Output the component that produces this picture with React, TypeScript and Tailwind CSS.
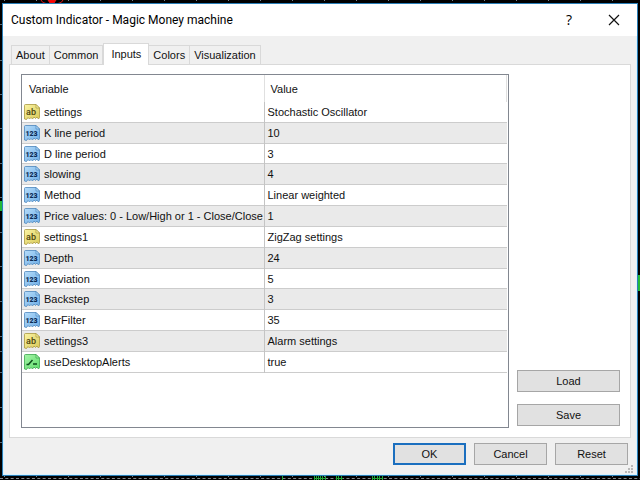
import React from "react";

type Kind = "text" | "number" | "bool";

type Row = { kind: Kind; name: string; value: string };

const rows: Row[] = [
  { kind: "text", name: "settings", value: "Stochastic Oscillator" },
  { kind: "number", name: "K line period", value: "10" },
  { kind: "number", name: "D line period", value: "3" },
  { kind: "number", name: "slowing", value: "4" },
  { kind: "number", name: "Method", value: "Linear weighted" },
  { kind: "number", name: "Price values: 0 - Low/High or 1 - Close/Close", value: "1" },
  { kind: "text", name: "settings1", value: "ZigZag settings" },
  { kind: "number", name: "Depth", value: "24" },
  { kind: "number", name: "Deviation", value: "5" },
  { kind: "number", name: "Backstep", value: "3" },
  { kind: "number", name: "BarFilter", value: "35" },
  { kind: "text", name: "settings3", value: "Alarm settings" },
  { kind: "bool", name: "useDesktopAlerts", value: "true" },
];

const palette = {
  text: { light: "#fbf4a4", dark: "#d9c957", edge: "#a8983f", ink: "#4a430c" },
  number: { light: "#b5dcfa", dark: "#6faee6", edge: "#4c86bd", ink: "#0b2c55" },
  bool: { light: "#a5f5a8", dark: "#5fdc6c", edge: "#3aa54c", ink: "#0c4d1b" },
};

function TypeIcon({ kind }: { kind: Kind }) {
  const c = palette[kind];
  return (
    <svg width="16" height="16" viewBox="0 0 16 16" className="block shrink-0" aria-hidden="true">
      <defs>
        <linearGradient id={`fill-${kind}`} x1="0" y1="0" x2="1" y2="1">
          <stop offset="0" stopColor={c.light} />
          <stop offset="1" stopColor={c.dark} />
        </linearGradient>
      </defs>
      <path
        d="M.5 1.500q0-1 1-1H12L15.500 4v9.500L14.500 15l-1.500-2-1.500 1.500-1.500-1.500-1.500 2L7 13.500 5.500 15 4 13.500l-1.500 2-2-.5z"
        fill={`url(#fill-${kind})`}
        stroke={c.edge}
        strokeWidth=".8"
      />
      <path d="M12 .5V4h3.500z" fill={c.light} stroke={c.edge} strokeWidth=".7" />
      {kind === "text" && (
        <text x="7" y="10.500" textAnchor="middle" fontSize="9" fontWeight="500" fill={c.ink} fontFamily="Roboto, sans-serif">
          ab
        </text>
      )}
      {kind === "number" && (
        <text x="7.500" y="11" textAnchor="middle" fontSize="7" fontWeight="900" fill={c.ink} fontFamily="Roboto, sans-serif">
          123
        </text>
      )}
      {kind === "bool" && <path d="M2.500 10.500h2l4-4.500M9 10h4" fill="none" stroke={c.ink} strokeWidth="1.500" />}
    </svg>
  );
}

const columns = Array.from({ length: 20 }, (_, i) => 4 + i * 32);
const levels = [24, 60, 94, 128, 163, 197, 232, 266, 301, 336, 351, 372, 407, 442];
const bars = [282, 314, 316, 318, 320, 322, 325, 336, 338, 341, 372, 374, 377, 379, 382];

function Chart() {
  return (
    <svg className="absolute inset-0 h-full w-full" viewBox="0 0 640 480" preserveAspectRatio="none" aria-hidden="true">
      {columns.map((x) => (
        <path key={x} d={`M${x + 0.5} 0v1M${x + 0.5} 475v2`} stroke="#76828e" />
      ))}
      {levels.map((y) => (
        <path key={y} d={`M0 ${y + 0.5}h2`} stroke="#5c6874" />
      ))}
      <path d="M0 478.500h640" stroke="#80868c" strokeDasharray="3 2.330" />
      <g stroke="#e01616" fill="none">
        <path d="M41 0q1 3 5 3.500M63 0q-1 3-5 3.500" />
        <path d="M48 0h8l-2 3h-4z" fill="#ff0000" />
      </g>
      <path d="M0 201h2v10H0zM638 275h2v16h-2z" fill="#22b93a" />
      {bars.map((x) => (
        <path key={x} d={`M${x + 0.5} 475v5`} stroke="#1fa334" />
      ))}
      <path d="M314 478.500h12M336 478.500h7M372 478.500h11" stroke="#1fa334" />
    </svg>
  );
}

function Button({ children, wide, primary }: { children: React.ReactNode; wide?: boolean; primary?: boolean }) {
  return (
    <button
      type="button"
      className={`flex h-[22px] items-center justify-center bg-[#e1e1e1] ${wide ? "w-full" : "w-[73px]"} ${
        primary ? "border-2 border-[#1b6fbf]" : "border border-[#a6a6a6]"
      }`}
    >
      {children}
    </button>
  );
}

function Tab({ label, active }: { label: string; active?: boolean }) {
  return (
    <button
      type="button"
      role="tab"
      aria-selected={!!active}
      className={
        active
          ? "-mb-px h-[22px] border border-b-0 border-[#d9d9d9] bg-white px-[7px] pb-0.5"
          : "h-[19px] border border-b-0 border-[#d9d9d9] bg-[#f0f0f0] px-1 not-first:border-l-0"
      }
    >
      {label}
    </button>
  );
}

export default function App() {
  return (
    <div className="relative flex min-h-screen flex-col bg-black px-0.5 pt-[3px] pb-1 font-['Liberation_Sans',Arial,sans-serif] text-[11px] leading-4 text-[#111]">
      <Chart />
      <main className="relative flex flex-1 flex-col border border-[#2a7fb8] bg-[#f0f0f0] inset-shadow-[0_0_0_1px_#d8f2ff]">
        <header className="flex h-8 items-center bg-white pr-[17px] pl-2 text-black">
          <h1 className="flex-1 font-[Roboto,sans-serif] text-[12px]">Custom Indicator - Magic Money machine</h1>
          <button type="button" aria-label="Help" className="mr-9 font-['Open_Sans',sans-serif] text-[14px]">
            ?
          </button>
          <button type="button" aria-label="Close">
            <svg width="12" height="12" viewBox="0 0 12 12" className="block">
              <path d="M1 1l10 10M11 1L1 11" stroke="#111" strokeWidth="1.200" />
            </svg>
          </button>
        </header>

        <div className="flex flex-1 flex-col px-1.5 pt-[7px]">
          <div role="tablist" className="relative z-10 flex items-end px-0.5">
            <Tab label="About" />
            <Tab label="Common" />
            <Tab label="Inputs" active />
            <Tab label="Colors" />
            <Tab label="Visualization" />
          </div>

          <section className="flex flex-1 gap-2 border border-[#d9d9d9] bg-white pt-[9px] pr-2.5 pb-[9px] pl-[11px]">
            <div className="flex-1 border border-[#828790] pr-px">
              <table className="h-[298px] w-full table-fixed border-collapse text-left">
                <colgroup>
                  <col className="w-[242px]" />
                  <col />
                </colgroup>
                <thead>
                  <tr className="h-[27px]">
                    <th className="border-r border-[#e0e0e0] pl-[7px] font-normal">Variable</th>
                    <th className="border-r border-[#e0e0e0] pl-1.5 font-normal">Value</th>
                  </tr>
                </thead>
                <tbody>
                  {rows.map((r) => (
                    <tr key={r.name} className="border-b border-[#cccccc] even:bg-[#eaeaea]">
                      <td className="border-r border-[#c4c4c4] pl-0.5">
                        <div className="flex items-center gap-1 whitespace-nowrap">
                          <TypeIcon kind={r.kind} />
                          {r.name}
                        </div>
                      </td>
                      <td className="pl-[3px]">{r.value}</td>
                    </tr>
                  ))}
                </tbody>
              </table>
            </div>
            <div className="flex w-[103px] flex-col justify-end gap-3 pb-0.5">
              <Button wide>Load</Button>
              <Button wide>Save</Button>
            </div>
          </section>
        </div>

        <footer className="flex justify-end gap-2 pt-[5px] pr-[9px] pb-2.5">
          <Button primary>OK</Button>
          <Button>Cancel</Button>
          <Button>Reset</Button>
        </footer>
        <svg width="8" height="8" viewBox="0 0 8 8" className="absolute right-1 bottom-0.5" aria-hidden="true">
          <path d="M6 0h2v2H6zM6 3h2v2H6zM3 3h2v2H3zM0 6h2v2H0zM3 6h2v2H3zM6 6h2v2H6z" fill="#b8b8b8" />
        </svg>
      </main>
    </div>
  );
}
